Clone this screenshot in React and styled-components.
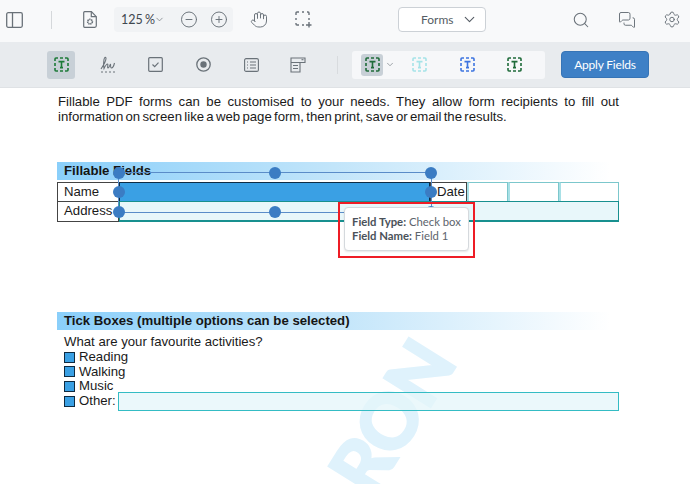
import React from "react";
import styled, { createGlobalStyle } from "styled-components";
import {
  ChevronDown,
  CircleMinus,
  CirclePlus,
  Hand,
  Search,
  MessagesSquare,
  Settings,
} from "lucide-react";

const GlobalStyle = createGlobalStyle`
  html, body {
    margin: 0;
    padding: 0;
    height: 484px;
    overflow: hidden;
    background: #fff;
  }
  * { box-sizing: border-box; }
`;

const Wrapper = styled.div`
  width: 690px;
  height: 484px;
  overflow: hidden;
  font-family: Lato, sans-serif;
  display: flex;
  flex-direction: column;
`;

const TopBar = styled.div`
  height: 42px;
  flex: none;
  background: #f8f9fa;
  display: flex;
  align-items: center;
  color: #6a7279;
  padding-bottom: 3px;
`;

const Slot = styled.div`
  display: flex;
  align-items: center;
  justify-content: center;
  flex: none;
  width: ${(p) => p.$w}px;
  margin-left: ${(p) => p.$ml || 0}px;
`;

const Divider = styled.div`
  width: 1px;
  height: ${(p) => p.$h}px;
  flex: none;
  background: ${(p) => p.$color};
  margin-left: ${(p) => p.$ml}px;
`;

const ZoomGroup = styled.div`
  width: 119px;
  height: 25px;
  margin-left: 17px;
  flex: none;
  border-radius: 4px;
  background: #f1f3f5;
  display: flex;
  align-items: center;
  padding-left: 7px;
`;

const ZoomText = styled.span`
  font-size: 12.5px;
  word-spacing: -1px;
  color: #3f474f;
  width: 33px;
  white-space: nowrap;
`;

const ModeSelect = styled.div`
  width: 88px;
  height: 25px;
  margin-left: 86px;
  flex: none;
  background: #fff;
  border: 1px solid #ccd1d6;
  border-radius: 4px;
  display: flex;
  align-items: center;
  padding-left: 22px;
  font-size: 12px;
  color: #555d65;
  justify-content: space-between;
  padding-right: 7px;
`;

const FieldBar = styled.div`
  height: 46px;
  flex: none;
  background: #e8ebee;
  border-bottom: 1px solid #dfe2e5;
  display: flex;
  align-items: center;
  color: #6a7279;
`;

const ToolButton = styled.div`
  width: ${(p) => p.$size || 28}px;
  height: ${(p) => p.$size || 28}px;
  flex: none;
  display: flex;
  align-items: center;
  justify-content: center;
  border-radius: 3px;
  margin-left: ${(p) => p.$ml || 0}px;
  background: ${(p) => (p.$active ? "#c8d0d7" : "transparent")};
`;

const TypeGroup = styled.div`
  width: 193px;
  height: 28px;
  flex: none;
  margin-left: 14px;
  background: #f6f7f9;
  border-radius: 3px;
  display: flex;
  align-items: center;
  padding-left: 9px;
`;

const ApplyButton = styled.div`
  width: 88px;
  height: 27px;
  flex: none;
  margin-left: 16px;
  background: #3e80c6;
  border: 1px solid #3674b6;
  border-radius: 4px;
  color: #fff;
  font-size: 12px;
  letter-spacing: -0.2px;
  display: flex;
  align-items: center;
  justify-content: center;
`;

const Page = styled.div`
  position: relative;
  flex: 1;
  background: #fff;
  padding: 7px 71px 0 57px;
  font-family: "Liberation Sans", Arial, sans-serif;
  color: #1a1a1a;
  overflow: hidden;
`;

const Intro = styled.p`
  margin: 0;
  font-size: 13.2px;
  line-height: 14.6px;
  word-spacing: -1.4px;
  text-align: justify;
  padding-left: 1px;
  position: relative;
`;

const SectionBand = styled.div`
  height: 18px;
  width: 553px;
  margin-top: ${(p) => p.$mt}px;
  background: linear-gradient(90deg, #8acffa 0%, #c2e5fa 50%, #ffffff 100%);
  padding-left: 7px;
  font-size: 13.2px;
  font-weight: 700;
  line-height: 18px;
  color: #151515;
  position: relative;
`;

const FormTable = styled.div`
  display: grid;
  grid-template-columns: 62px 311px 37px 41px 51px 60px;
  grid-template-rows: 20px 20px;
  margin-top: 2px;
  width: 562px;
  position: relative;
  font-size: 13.2px;
  line-height: 17px;
`;

const LabelCell = styled.div`
  border: 1px solid #444;
  margin-top: ${(p) => (p.$lower ? -1 : 0)}px;
  padding-left: 6px;
  white-space: nowrap;
`;

const BlueField = styled.div`
  background: #3aa0e4;
  border: 1px solid #0d2c45;
`;

const TealCell = styled.div`
  background: #fff;
  border: 1px solid #7cc7cc;
  border-left: 2px solid #a8e0e6;
`;

const AddressField = styled.div`
  grid-column: 2 / 7;
  margin-top: -1px;
  background: rgba(226, 245, 249, 0.8);
  border: 1px solid #18908f;
  border-bottom-width: 2px;
`;

const TickList = styled.div`
  position: relative;
  font-size: 13.2px;
  line-height: 14.7px;
  margin-top: 5px;
  padding-left: 7px;
`;

const TickRow = styled.div`
  display: flex;
  align-items: center;
  height: 14.7px;
`;

const TickBox = styled.span`
  width: 11px;
  height: 11px;
  flex: none;
  background: #3aa0e4;
  border: 1.5px solid #0f2a40;
  margin-right: 4px;
`;

const OtherField = styled.div`
  position: relative;
  width: 502px;
  height: 19px;
  margin-left: 2px;
  margin-top: 0;
  background: rgba(228, 246, 249, 0.75);
  border: 1.5px solid #34bcc4;
`;

const Watermark = styled.div`
  position: absolute;
  left: 290px;
  top: 291px;
  width: 200px;
  height: 76px;
  font-family: Lato, sans-serif;
  font-weight: 900;
  font-size: 76px;
  line-height: 76px;
  letter-spacing: -3px;
  text-align: center;
  color: #dff2fc;
  -webkit-text-stroke: 2px #dff2fc;
  transform: rotate(-58deg);
  white-space: nowrap;
`;

const Selection = styled.div`
  position: absolute;
  left: 117.5px;
  top: 83.5px;
  width: 314px;
  height: 41px;
  border: 1.5px solid #5a8cc8;
`;

const Handle = styled.span`
  position: absolute;
  left: ${(p) => p.$x}%;
  top: ${(p) => p.$y}%;
  width: 12px;
  height: 12px;
  margin: -6px 0 0 -6px;
  border-radius: 50%;
  background: #3b7cc3;
`;

const RedFrame = styled.div`
  position: absolute;
  left: 338px;
  top: 114px;
  width: 137px;
  height: 56px;
  border: 2px solid #ee1c25;
  padding: 3px 4px;
`;

const Tooltip = styled.div`
  background: #fff;
  border: 1px solid #d5d9dd;
  border-radius: 4px;
  box-shadow: 0 1px 2px rgba(0, 0, 0, 0.1);
  height: 44px;
  width: 125px;
  padding: 7px 7px;
  font-family: Lato, sans-serif;
  font-size: 11.3px;
  line-height: 14px;
  color: #5c646c;
  white-space: nowrap;
  b {
    color: #4a5159;
    font-weight: 700;
  }
`;

function PanelIcon() {
  return (
    <svg width="17" height="16" viewBox="0 0 17 16" fill="none" stroke="#6a7279" strokeWidth="1.3">
      <rect x=".7" y=".7" width="15.600" height="14.600" rx="1.500" />
      <path d="M6.500 .7v14.600" />
    </svg>
  );
}

function PageGearIcon() {
  return (
    <svg width="14" height="17" viewBox="0 0 14 17" fill="none" stroke="#6a7279" strokeWidth="1.200">
      <path d="M1.600 .7h6.800l4.900 5v9.100a1.500 1.500 0 0 1-1.500 1.500H1.600A1 1 0 0 1 .7 15.300V1.600A1 1 0 0 1 1.600 .7z" />
      <path d="M8.300 .7v5h5" />
      <circle cx="7" cy="10.700" r="2.300" strokeWidth="1.700" strokeDasharray="1.300 .5" />
    </svg>
  );
}

function SelectionIcon() {
  return (
    <svg width="17" height="17" viewBox="0 0 17 17" fill="none" stroke="#6a7279" strokeWidth="1.400">
      <path d="M1 4V2a1 1 0 0 1 1-1h2M7 1h2M12 1h1a1 1 0 0 1 1 1v2M14 7v2M1 7v2M1 12v1a1 1 0 0 0 1 1h2M7 14h2" />
      <path d="M14 11v5.500M11 14h5.500" />
    </svg>
  );
}

function TextFieldIcon({ color, size = 15 }) {
  return (
    <svg width={size} height={size} viewBox="0 0 15 15" fill="none" stroke={color} strokeWidth="1.600">
      <path d="M1 4V2a1 1 0 0 1 1-1h2M6 1h3M11 1h2a1 1 0 0 1 1 1v2M14 6v3M14 11v2a1 1 0 0 1-1 1h-2M9 14H6M4 14H2a1 1 0 0 1-1-1v-2M1 9V6" />
      <path d="M4.500 4.600h6M7.500 4.600v6M6 10.600h3" />
    </svg>
  );
}

function SignIcon() {
  return (
    <svg width="16" height="18" viewBox="0 0 16 18" fill="none" stroke="#6a7279" strokeWidth="1.100">
      <path d="M1 13c2-3 5-8 5-10.500C6 .5 4.500 1 4 3.500S3.500 10 4 12.500c1-2 2.500-4.500 3.500-4.500s-.5 4 .5 4 2-3 2.500-4c0 1.500 0 4 1 4s2.500-3 3-5" />
      <path d="M1 16h2M5 16h2M9 16h2M13 16h2" strokeWidth="1" />
    </svg>
  );
}

function CheckIcon() {
  return (
    <svg width="15" height="15" viewBox="0 0 15 15" fill="none" stroke="#6a7279" strokeWidth="1.200">
      <rect x=".7" y=".7" width="13.600" height="13.600" rx="1" />
      <path d="M4.500 7.500l2.200 2.200 3.800-4" />
    </svg>
  );
}

function RadioIcon() {
  return (
    <svg width="15" height="15" viewBox="0 0 15 15" fill="none" stroke="#6a7279" strokeWidth="1.300">
      <circle cx="7.500" cy="7.500" r="6.700" />
      <circle cx="7.500" cy="7.500" r="3.200" fill="#6a7279" stroke="none" />
    </svg>
  );
}

function ListIcon() {
  return (
    <svg width="15" height="14" viewBox="0 0 15 14" fill="none" stroke="#6a7279" strokeWidth="1.100">
      <rect x=".6" y=".6" width="13.800" height="12.800" rx="1.500" />
      <path d="M3 4h1M6 4h6M3 7h1M6 7h6M3 10h1M6 10h6" />
    </svg>
  );
}

function FormIcon() {
  return (
    <svg width="16" height="16" viewBox="0 0 16 16" fill="none" stroke="#6a7279" strokeWidth="1.100">
      <path d="M10 5.500V15H1V1h14v4.500z" />
      <path d="M1 5.500h9M3 8.500h5M3 11.500h5" />
      <path d="M11.500 2.700h2" />
    </svg>
  );
}

export default function App() {
  return (
    <Wrapper>
      <GlobalStyle />
      <TopBar>
        <Slot $w={17} $ml={6}>
          <PanelIcon />
        </Slot>
        <Divider $h={18} $color="#d5d8db" $ml={28} />
        <Slot $w={14} $ml={31}>
          <PageGearIcon />
        </Slot>
        <ZoomGroup>
          <ZoomText>125 %</ZoomText>
          <ChevronDown size={11} strokeWidth={1.500} />
          <Slot $w={18} $ml={15}>
            <CircleMinus size={19} strokeWidth={1.300} />
          </Slot>
          <Slot $w={18} $ml={12}>
            <CirclePlus size={19} strokeWidth={1.300} />
          </Slot>
        </ZoomGroup>
        <Slot $w={18} $ml={17}>
          <Hand size={21} strokeWidth={1.300} />
        </Slot>
        <Slot $w={17} $ml={27}>
          <SelectionIcon />
        </Slot>
        <ModeSelect>
          Forms
          <ChevronDown size={17} strokeWidth={1.600} />
        </ModeSelect>
        <Slot $w={18} $ml={86}>
          <Search size={22} strokeWidth={1.400} />
        </Slot>
        <Slot $w={18} $ml={28}>
          <MessagesSquare size={20} strokeWidth={1.300} />
        </Slot>
        <Slot $w={18} $ml={27}>
          <Settings size={21} strokeWidth={1.300} />
        </Slot>
      </TopBar>
      <FieldBar>
        <ToolButton $ml={47} $active>
          <TextFieldIcon color="#1c7a38" />
        </ToolButton>
        <ToolButton $ml={19}>
          <SignIcon />
        </ToolButton>
        <ToolButton $ml={19}>
          <CheckIcon />
        </ToolButton>
        <ToolButton $ml={20}>
          <RadioIcon />
        </ToolButton>
        <ToolButton $ml={20}>
          <ListIcon />
        </ToolButton>
        <ToolButton $ml={19}>
          <FormIcon />
        </ToolButton>
        <Divider $h={18} $color="#d8dbde" $ml={25} />
        <TypeGroup>
          <ToolButton $size={22} $active>
            <TextFieldIcon color="#1f6b3a" />
          </ToolButton>
          <Slot $w={10} $ml={2}>
            <ChevronDown size={11} strokeWidth={1.500} />
          </Slot>
          <ToolButton $size={22} $ml={13}>
            <TextFieldIcon color="#a5e3e8" />
          </ToolButton>
          <ToolButton $size={22} $ml={26}>
            <TextFieldIcon color="#3d74e0" />
          </ToolButton>
          <ToolButton $size={22} $ml={25}>
            <TextFieldIcon color="#1f6b3a" />
          </ToolButton>
        </TypeGroup>
        <ApplyButton>Apply Fields</ApplyButton>
      </FieldBar>
      <Page>
        <Watermark>RON</Watermark>
        <Intro>
          Fillable PDF forms can be customised to your needs. They allow form recipients to fill out
          information on screen like a web page form, then print, save or email the results.
        </Intro>
        <SectionBand $mt={38}>Fillable Fields</SectionBand>
        <FormTable>
          <LabelCell>Name</LabelCell>
          <BlueField />
          <LabelCell>Date</LabelCell>
          <TealCell />
          <TealCell />
          <TealCell />
          <LabelCell $lower>Address</LabelCell>
          <AddressField />
        </FormTable>
        <SectionBand $mt={90}>Tick Boxes (multiple options can be selected)</SectionBand>
        <TickList>
          <div>What are your favourite activities?</div>
          <TickRow>
            <TickBox />
            Reading
          </TickRow>
          <TickRow>
            <TickBox />
            Walking
          </TickRow>
          <TickRow>
            <TickBox />
            Music
          </TickRow>
          <TickRow>
            <TickBox />
            Other:
            <OtherField />
          </TickRow>
        </TickList>
        <Selection>
          <Handle $x={0} $y={0} />
          <Handle $x={50} $y={0} />
          <Handle $x={100} $y={0} />
          <Handle $x={0} $y={50} />
          <Handle $x={100} $y={50} />
          <Handle $x={0} $y={100} />
          <Handle $x={50} $y={100} />
          <Handle $x={100} $y={100} />
        </Selection>
        <RedFrame>
          <Tooltip>
            <b>Field Type:</b> Check box
            <br />
            <b>Field Name:</b> Field 1
          </Tooltip>
        </RedFrame>
      </Page>
    </Wrapper>
  );
}
